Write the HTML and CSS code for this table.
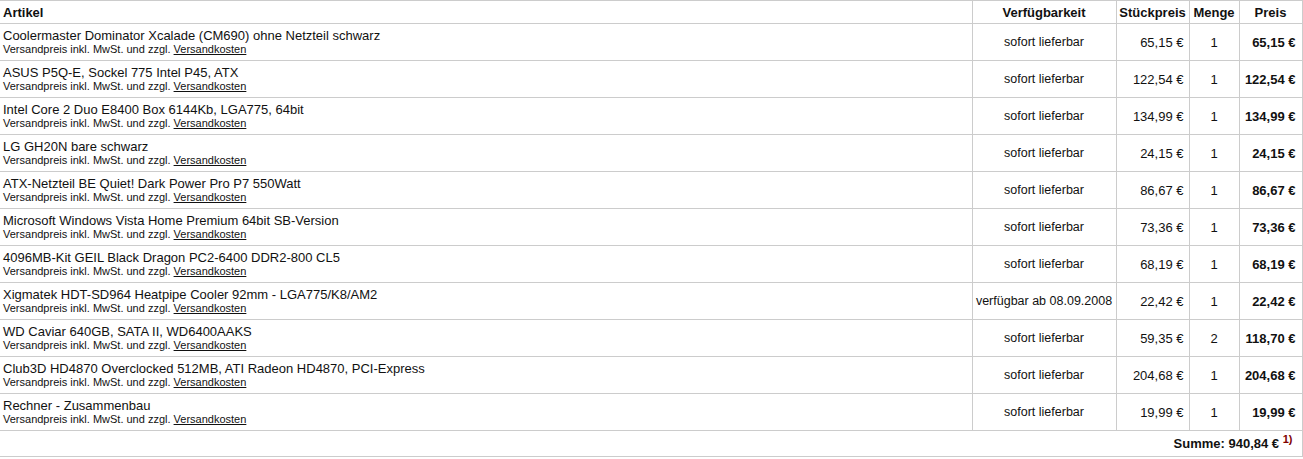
FILE: index.html
```html
<!DOCTYPE html>
<html lang="de">
<head>
<meta charset="utf-8">
<title>Warenkorb</title>
<link rel="stylesheet" href="styles.css">
</head>
<body>
<table class="cart">
  <colgroup>
    <col class="c-art">
    <col class="c-avail">
    <col class="c-unit">
    <col class="c-qty">
    <col class="c-price">
  </colgroup>
  <thead>
    <tr>
      <th class="h-art">Artikel</th>
      <th>Verfügbarkeit</th>
      <th>Stückpreis</th>
      <th>Menge</th>
      <th>Preis</th>
    </tr>
  </thead>
  <tbody>
    <tr><td class="art"><div class="name">Coolermaster Dominator Xcalade (CM690) ohne Netzteil schwarz</div><div class="ship">Versandpreis inkl. MwSt. und zzgl. <a href="#">Versandkosten</a></div></td><td class="avail">sofort lieferbar</td><td class="unit">65,15 €</td><td class="qty">1</td><td class="price">65,15 €</td></tr>
    <tr><td class="art"><div class="name">ASUS P5Q-E, Sockel 775 Intel P45, ATX</div><div class="ship">Versandpreis inkl. MwSt. und zzgl. <a href="#">Versandkosten</a></div></td><td class="avail">sofort lieferbar</td><td class="unit">122,54 €</td><td class="qty">1</td><td class="price">122,54 €</td></tr>
    <tr><td class="art"><div class="name">Intel Core 2 Duo E8400 Box 6144Kb, LGA775, 64bit</div><div class="ship">Versandpreis inkl. MwSt. und zzgl. <a href="#">Versandkosten</a></div></td><td class="avail">sofort lieferbar</td><td class="unit">134,99 €</td><td class="qty">1</td><td class="price">134,99 €</td></tr>
    <tr><td class="art"><div class="name">LG GH20N bare schwarz</div><div class="ship">Versandpreis inkl. MwSt. und zzgl. <a href="#">Versandkosten</a></div></td><td class="avail">sofort lieferbar</td><td class="unit">24,15 €</td><td class="qty">1</td><td class="price">24,15 €</td></tr>
    <tr><td class="art"><div class="name">ATX-Netzteil BE Quiet! Dark Power Pro P7 550Watt</div><div class="ship">Versandpreis inkl. MwSt. und zzgl. <a href="#">Versandkosten</a></div></td><td class="avail">sofort lieferbar</td><td class="unit">86,67 €</td><td class="qty">1</td><td class="price">86,67 €</td></tr>
    <tr><td class="art"><div class="name">Microsoft Windows Vista Home Premium 64bit SB-Version</div><div class="ship">Versandpreis inkl. MwSt. und zzgl. <a href="#">Versandkosten</a></div></td><td class="avail">sofort lieferbar</td><td class="unit">73,36 €</td><td class="qty">1</td><td class="price">73,36 €</td></tr>
    <tr><td class="art"><div class="name">4096MB-Kit GEIL Black Dragon PC2-6400 DDR2-800 CL5</div><div class="ship">Versandpreis inkl. MwSt. und zzgl. <a href="#">Versandkosten</a></div></td><td class="avail">sofort lieferbar</td><td class="unit">68,19 €</td><td class="qty">1</td><td class="price">68,19 €</td></tr>
    <tr><td class="art"><div class="name">Xigmatek HDT-SD964 Heatpipe Cooler 92mm - LGA775/K8/AM2</div><div class="ship">Versandpreis inkl. MwSt. und zzgl. <a href="#">Versandkosten</a></div></td><td class="avail">verfügbar ab 08.09.2008</td><td class="unit">22,42 €</td><td class="qty">1</td><td class="price">22,42 €</td></tr>
    <tr><td class="art"><div class="name">WD Caviar 640GB, SATA II, WD6400AAKS</div><div class="ship">Versandpreis inkl. MwSt. und zzgl. <a href="#">Versandkosten</a></div></td><td class="avail">sofort lieferbar</td><td class="unit">59,35 €</td><td class="qty">2</td><td class="price">118,70 €</td></tr>
    <tr><td class="art"><div class="name">Club3D HD4870 Overclocked 512MB, ATI Radeon HD4870, PCI-Express</div><div class="ship">Versandpreis inkl. MwSt. und zzgl. <a href="#">Versandkosten</a></div></td><td class="avail">sofort lieferbar</td><td class="unit">204,68 €</td><td class="qty">1</td><td class="price">204,68 €</td></tr>
    <tr><td class="art"><div class="name">Rechner - Zusammenbau</div><div class="ship">Versandpreis inkl. MwSt. und zzgl. <a href="#">Versandkosten</a></div></td><td class="avail">sofort lieferbar</td><td class="unit">19,99 €</td><td class="qty">1</td><td class="price">19,99 €</td></tr>
  </tbody>
  <tfoot>
    <tr><td class="sum" colspan="5">Summe: 940,84 € <sup class="note">1)</sup></td></tr>
  </tfoot>
</table>
</body>
</html>
```

FILE: styles.css
```css
html, body {
  margin: 0;
  padding: 0;
  background: #ffffff;
}

body {
  font-family: "Liberation Sans", Arial, sans-serif;
  color: #111111;
}

.cart {
  border-collapse: collapse;
  table-layout: fixed;
  width: 1302px;
  font-size: 13px;
}

.c-art { width: 972px; }
.c-avail { width: 144px; }
.c-unit { width: 73px; }
.c-qty { width: 50px; }
.c-price { width: 63px; }

.cart th,
.cart td {
  border: 1px solid #cccccc;
  padding: 0;
}

.cart tr > :first-child {
  border-left: none;
}

.cart th {
  height: 22px;
  font-weight: bold;
  font-size: 13px;
  text-align: center;
  vertical-align: middle;
  color: #111111;
}

.cart th.h-art {
  text-align: left;
  padding-left: 3px;
}

.cart tbody td {
  height: 36px;
  vertical-align: middle;
}

.art {
  padding-left: 3px !important;
}

.name {
  font-size: 13px;
  line-height: 14px;
}

.ship {
  font-size: 11px;
  line-height: 12px;
}

.ship a {
  color: #111111;
  text-decoration: underline;
}

.avail {
  text-align: center;
  font-size: 12.5px;
}

.unit {
  text-align: right;
  padding-right: 5px !important;
}

.qty {
  text-align: center;
}

.price {
  text-align: right;
  font-weight: bold;
  padding-right: 6px !important;
}

.cart tfoot td.sum {
  height: 25px;
  text-align: right;
  font-weight: bold;
  padding-right: 9px;
  vertical-align: middle;
}

.note {
  color: #800000;
  font-size: 11px;
  vertical-align: 5px;
  line-height: 0;
}
```
